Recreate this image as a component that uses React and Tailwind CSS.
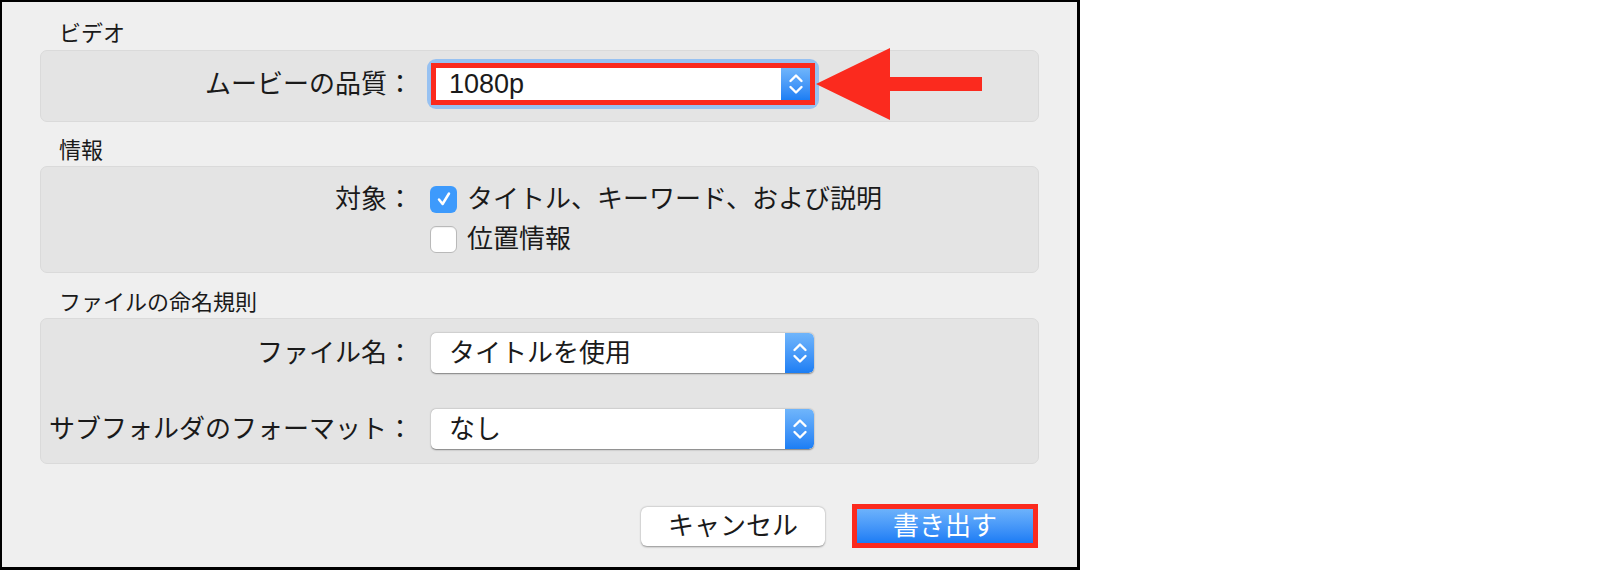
import { useState } from 'react';

const jp = { fontFamily: '"Liberation Sans", "Noto Sans CJK JP", sans-serif' };

const Stepper = ({ className = '' }) => (
  <div className={`flex w-[29px] items-center justify-center bg-gradient-to-b from-[#6fb5fb] to-[#1b7ef4] ${className}`}>
    <svg width="16" height="28" viewBox="0 0 16 28" fill="none" stroke="white" strokeWidth="2.4" strokeLinecap="round" strokeLinejoin="round">
      <path d="M2.5 11 L8 5.5 L13.5 11" />
      <path d="M2.5 17 L8 22.5 L13.5 17" />
    </svg>
  </div>
);

const Select = ({ value }) => (
  <div className="flex h-[40px] w-[383px] overflow-hidden rounded-[5px] bg-white shadow-[0_0.5px_1.5px_rgba(0,0,0,0.45)]">
    <div className="flex flex-1 items-center pl-[18px] text-[26px] leading-none text-[#1a1a1a]">{value}</div>
    <Stepper className="rounded-r-[5px]" />
  </div>
);

const Checkbox = ({ checked }) =>
  checked ? (
    <div className="flex h-[27px] w-[27px] items-center justify-center rounded-[6px] bg-[#3d9afc]">
      <svg width="18" height="18" viewBox="0 0 18 18" fill="none" stroke="white" strokeWidth="2.5" strokeLinecap="round" strokeLinejoin="round">
        <path d="M4 9.5 L7.6 14 L14 3.5" />
      </svg>
    </div>
  ) : (
    <div className="h-[27px] w-[27px] rounded-[6px] border border-[#b9b9b9] bg-white shadow-[inset_0_1px_1px_rgba(0,0,0,0.06)]" />
  );

const Label = ({ children }) => (
  <div className="w-[372px] shrink-0 text-right text-[26px] leading-none text-[#1a1a1a]">{children}</div>
);

const SectionTitle = ({ children, className }) => (
  <div className={`pl-[19px] text-[22px] leading-[28px] text-[#1a1a1a] ${className}`}>{children}</div>
);

const Panel = ({ className, children }) => (
  <div className={`rounded-[7px] border border-[#dadada] bg-[#e4e4e4] ${className}`}>{children}</div>
);

export default function App() {
  const [info, setInfo] = useState(true);
  const [loc, setLoc] = useState(false);

  return (
    <div className="min-h-[570px] bg-white" style={jp}>
      <div className="relative h-[570px] w-[1080px] border-t-2 border-l-2 border-r-[3px] border-b-[3px] border-black bg-[#efefef] px-[38px]">
        <SectionTitle className="pt-[18px] pb-[2px]">ビデオ</SectionTitle>
        <Panel className="h-[72px] pt-[8px]">
          <div className="flex items-center">
            <Label>ムービーの品質：</Label>
            <div className="ml-[14px] rounded-[9px] bg-[#97c1f1] p-[4px]">
              <div className="flex h-[42px] w-[384px] border-[5px] border-[#fb2a1e] bg-white">
                <div className="flex flex-1 items-center pl-[13px] text-[27px] leading-none text-[#1a1a1a]">1080p</div>
                <Stepper />
              </div>
            </div>
          </div>
        </Panel>

        <SectionTitle className="pt-[15px] pb-[1px]">情報</SectionTitle>
        <Panel className="h-[107px] pt-[12px]">
          <div className="flex h-[40px] items-center">
            <Label>対象：</Label>
            <button className="ml-[17px] flex items-center gap-[10px]" onClick={() => setInfo(!info)}>
              <Checkbox checked={info} />
              <span className="text-[26px] leading-none text-[#1a1a1a]">タイトル、キーワード、および説明</span>
            </button>
          </div>
          <div className="flex h-[40px] items-center">
            <div className="w-[372px] shrink-0" />
            <button className="ml-[17px] flex items-center gap-[10px]" onClick={() => setLoc(!loc)}>
              <Checkbox checked={loc} />
              <span className="text-[26px] leading-none text-[#1a1a1a]">位置情報</span>
            </button>
          </div>
        </Panel>

        <SectionTitle className="pt-[16px] pb-[1px]">ファイルの命名規則</SectionTitle>
        <Panel className="h-[146px] pt-[14px]">
          <div className="flex items-center">
            <Label>ファイル名：</Label>
            <div className="ml-[18px]">
              <Select value="タイトルを使用" />
            </div>
          </div>
          <div className="mt-[36px] flex items-center">
            <Label>サブフォルダのフォーマット：</Label>
            <div className="ml-[18px]">
              <Select value="なし" />
            </div>
          </div>
        </Panel>

        <div className="mt-[40px] flex items-center justify-end pr-[1px]">
          <button className="flex h-[39px] w-[184px] items-center justify-center rounded-[6px] bg-white text-[26px] leading-none text-[#1a1a1a] shadow-[0_0.5px_2px_rgba(0,0,0,0.4)]">
            キャンセル
          </button>
          <div className="ml-[27px] h-[44px] w-[186px] border-[5px] border-[#fb2a1e]">
            <button className="flex h-full w-full items-center justify-center bg-gradient-to-b from-[#6cb2fb] to-[#1a7cf5] text-[26px] leading-none text-white">
              書き出す
            </button>
          </div>
        </div>

        <svg className="absolute left-[814px] top-[46px]" width="166" height="72" viewBox="0 0 166 72">
          <polygon points="0,36 74,0 74,29 166,29 166,43 74,43 74,72" fill="#fb2a1e" />
        </svg>
      </div>
    </div>
  );
}
